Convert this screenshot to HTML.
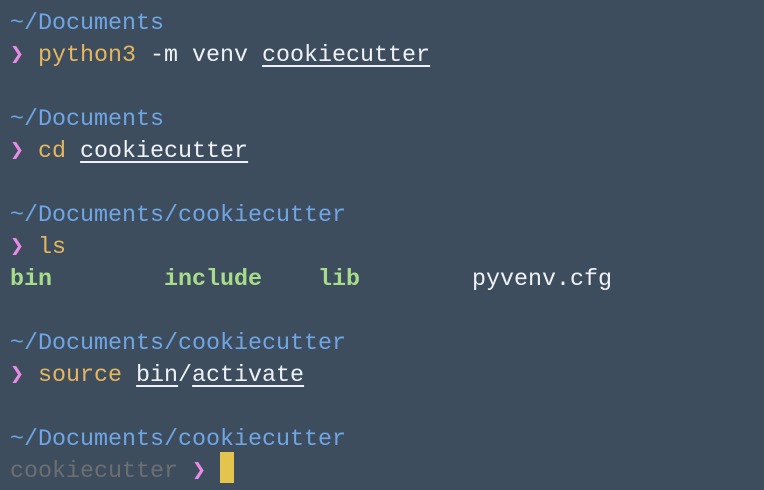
<!DOCTYPE html>
<html><head><style>
html,body{margin:0;padding:0;}
body{width:764px;height:490px;background:#3d4d5e;overflow:hidden;font-family:"Liberation Mono","DejaVu Sans Mono",monospace;font-size:23.33px;color:#eef2f6;}
.t{position:absolute;left:10px;top:8px;}
.l{height:32px;line-height:32px;white-space:pre;}
.b{color:#6fa6e3}
.y{color:#e6b75c}
.p{color:#e98be8;font-weight:bold}
.u{text-decoration:underline;text-underline-offset:4px;text-decoration-thickness:1.5px}
.g{color:#a6dc8a;font-weight:bold}
.gr{color:#6c6f72}
.c{display:inline-block;width:14px;height:31px;background:#e3c44d;vertical-align:middle;margin-top:-6px}
</style></head><body>
<div class="t">
<div class="l b">~/Documents</div>
<div class="l"><span class="p">❯</span> <span class="y">python3</span> -m venv <span class="u">cookiecutter</span></div>
<div class="l"> </div>
<div class="l b">~/Documents</div>
<div class="l"><span class="p">❯</span> <span class="y">cd</span> <span class="u">cookiecutter</span></div>
<div class="l"> </div>
<div class="l b">~/Documents/cookiecutter</div>
<div class="l"><span class="p">❯</span> <span class="y">ls</span></div>
<div class="l"><span class="g">bin</span>        <span class="g">include</span>    <span class="g">lib</span>        pyvenv.cfg</div>
<div class="l"> </div>
<div class="l b">~/Documents/cookiecutter</div>
<div class="l"><span class="p">❯</span> <span class="y">source</span> <span class="u">bin</span>/<span class="u">activate</span></div>
<div class="l"> </div>
<div class="l b">~/Documents/cookiecutter</div>
<div class="l"><span class="gr">cookiecutter</span> <span class="p">❯</span> <span class="c"></span></div>
</div>
</body></html>
